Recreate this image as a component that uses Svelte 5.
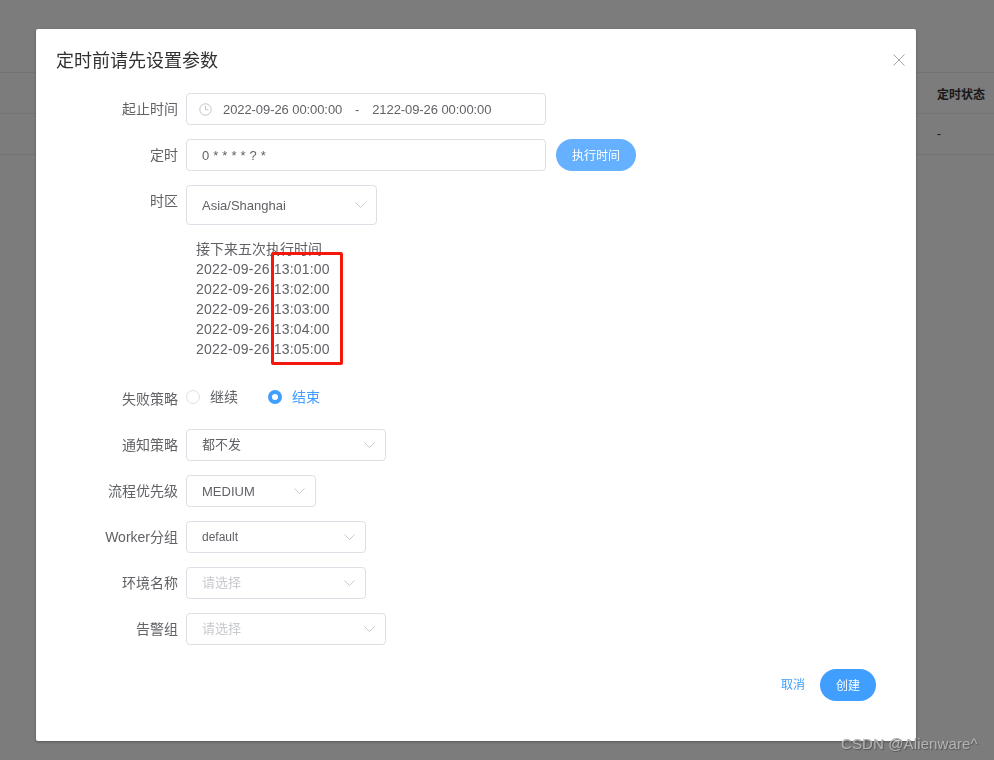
<script>
  const times = ['13:01:00', '13:02:00', '13:03:00', '13:04:00', '13:05:00'];
</script>

<div class="page">
  <div class="bg-head">
    <span class="bg-title">定时状态</span>
  </div>
  <div class="bg-row"><span class="bg-cell">-</span></div>
</div>

<div class="overlay">
  <div class="dialog">
    <header class="head">
      <h2>定时前请先设置参数</h2>
      <svg class="close" width="12" height="12" viewBox="0 0 12 12"><path d="M.5.5l11 11M11.5.5l-11 11" stroke="#a0a3a9" fill="none"/></svg>
    </header>

    <div class="form">
      <div class="row">
        <span class="label">起止时间</span>
        <div class="box range">
          <svg class="clock" width="13" height="13" viewBox="0 0 13 13"><circle cx="6.5" cy="6.5" r="5.7" stroke="#c0c4cc" fill="none"/><path d="M6.5 3v3.7h3" stroke="#c0c4cc" fill="none"/></svg>
          <span class="dt first">2022-09-26 00:00:00</span>
          <span class="sep">-</span>
          <span class="dt">2122-09-26 00:00:00</span>
        </div>
      </div>

      <div class="row">
        <span class="label">定时</span>
        <div class="box cron">0 * * * * ? *</div>
        <button class="btn exec">执行时间</button>
      </div>

      <div class="row tz">
        <span class="label">时区</span>
        <div class="box select w191">
          <span class="val">Asia/Shanghai</span>
          <svg class="chev" width="11" height="6" viewBox="0 0 11 6"><path d="M.5.5l5 5 5-5" stroke="#c8cbd2" fill="none"/></svg>
        </div>
      </div>

      <div class="times">
        <div class="cap">接下来五次执行时间</div>
        {#each times as t}
          <div>2022-09-26 {t}</div>
        {/each}
        <div class="mark"></div>
      </div>

      <div class="row radios">
        <span class="label">失败策略</span>
        <span class="radio"></span><span class="r-text">继续</span>
        <span class="radio on"></span><span class="r-text on">结束</span>
      </div>

      <div class="row">
        <span class="label">通知策略</span>
        <div class="box select w200">
          <span class="val cjk">都不发</span>
          <svg class="chev" width="11" height="6" viewBox="0 0 11 6"><path d="M.5.5l5 5 5-5" stroke="#c8cbd2" fill="none"/></svg>
        </div>
      </div>

      <div class="row">
        <span class="label">流程优先级</span>
        <div class="box select w130">
          <span class="val small">MEDIUM</span>
          <svg class="chev" width="11" height="6" viewBox="0 0 11 6"><path d="M.5.5l5 5 5-5" stroke="#c8cbd2" fill="none"/></svg>
        </div>
      </div>

      <div class="row">
        <span class="label">Worker分组</span>
        <div class="box select w180">
          <span class="val tiny">default</span>
          <svg class="chev" width="11" height="6" viewBox="0 0 11 6"><path d="M.5.5l5 5 5-5" stroke="#c8cbd2" fill="none"/></svg>
        </div>
      </div>

      <div class="row">
        <span class="label">环境名称</span>
        <div class="box select w180">
          <span class="val cjk ph">请选择</span>
          <svg class="chev" width="11" height="6" viewBox="0 0 11 6"><path d="M.5.5l5 5 5-5" stroke="#c8cbd2" fill="none"/></svg>
        </div>
      </div>

      <div class="row">
        <span class="label">告警组</span>
        <div class="box select w200">
          <span class="val cjk ph">请选择</span>
          <svg class="chev" width="11" height="6" viewBox="0 0 11 6"><path d="M.5.5l5 5 5-5" stroke="#c8cbd2" fill="none"/></svg>
        </div>
      </div>
    </div>

    <footer class="foot">
      <span class="cancel">取消</span>
      <button class="btn create">创建</button>
    </footer>
  </div>
</div>

<div class="wm">CSDN @Alienware^</div>

<style>
  :global(body) {
    margin: 0;
    background: #f8f8f8;
    font-family: "Liberation Sans", "Noto Sans CJK SC", sans-serif;
    overflow: hidden;
  }
  .page {
    height: 760px;
    padding-top: 72px;
    box-sizing: border-box;
  }
  .bg-head, .bg-row {
    height: 41px;
    border-top: 1px solid #e4e6ef;
    box-sizing: border-box;
    display: flex;
    align-items: center;
    padding-left: 937px;
    font-size: 12px;
    color: #333;
  }
  .bg-row { border-bottom: 1px solid #e4e6ef; height: 42px; }
  .bg-title { font-weight: 700; white-space: nowrap; }
  .overlay {
    position: fixed;
    inset: 0;
    background: rgba(0, 0, 0, 0.5);
  }
  .dialog {
    width: 880px;
    height: 712px;
    margin: 29px 0 0 36px;
    background: #fff;
    border-radius: 2px;
    box-shadow: 0 1px 3px rgba(0, 0, 0, 0.3);
    box-sizing: border-box;
    padding: 20px 40px 0 20px;
    color: #606266;
  }
  .head {
    display: flex;
    justify-content: space-between;
    align-items: flex-start;
    height: 44px;
    margin-right: -29px;
  }
  h2 {
    margin: 0;
    font-size: 18px;
    font-weight: 400;
    line-height: 24px;
    color: #303133;
  }
  .close { margin-top: 5px; }
  .form { display: flex; flex-direction: column; }
  .row {
    display: flex;
    align-items: center;
    margin-bottom: 14px;
    height: 32px;
  }
  .label {
    width: 122px;
    flex: none;
    margin-right: 8px;
    padding-bottom: 2px;
    text-align: right;
    font-size: 14px;
    color: #606266;
    white-space: nowrap;
  }
  .box {
    height: 32px;
    box-sizing: border-box;
    border: 1px solid #dcdfe6;
    border-radius: 4px;
    display: flex;
    align-items: center;
    font-size: 14px;
    color: #606266;
  }
  .range { width: 360px; padding-left: 12px; font-size: 13px; }
  .clock { margin-right: 11px; }
  .dt { letter-spacing: -0.08px; white-space: nowrap; }
  .sep { width: 30px; text-align: center; flex: none; }
  .cron { width: 360px; padding-left: 15px; font-size: 13px; letter-spacing: 0.2px; }
  .btn {
    border: 0;
    border-radius: 16px;
    height: 32px;
    color: #fff;
    font: inherit;
    font-size: 12px;
    padding: 0 0 2px;
  }
  .exec { width: 80px; background: #66b1ff; margin-left: 10px; }
  .tz { height: 40px; align-items: flex-start; }
  .tz .label { line-height: 32px; }
  .tz .box { height: 40px; }
  .select { padding-left: 15px; justify-content: space-between; padding-right: 10px; }
  .w191 { width: 191px; }
  .w200 { width: 200px; }
  .w130 { width: 130px; }
  .w180 { width: 180px; }
  .val { font-size: 13px; white-space: nowrap; }
  .val.cjk { padding-bottom: 4px; }
  .val.tiny { font-size: 12px; }
  .val.ph { color: #c8cacf; }
  .times {
    position: relative;
    padding-left: 140px;
    height: 144px;
    box-sizing: border-box;
    font-size: 14px;
    line-height: 20px;
    letter-spacing: 0.2px;
    color: #606266;
  }
  .cap { letter-spacing: 0; }
  .mark {
    position: absolute;
    left: 215px;
    top: 13px;
    width: 72px;
    height: 113px;
    border: 3px solid #f5160c;
    border-radius: 2px;
    box-sizing: border-box;
  }
  .radios { height: 20px; margin-bottom: 22px; margin-top: 4px; }
  .radios .label { padding: 1px 0 0; }
  .radio {
    width: 14px;
    height: 14px;
    border: 1px solid #dcdfe6;
    border-radius: 50%;
    box-sizing: border-box;
    flex: none;
  }
  .radio.on { border: 4.5px solid #409eff; background: #fff; margin-left: 30px; }
  .r-text { font-size: 14px; color: #606266; margin-left: 10px; padding-bottom: 2px; }
  .r-text.on { color: #409eff; }
  .foot {
    display: flex;
    justify-content: flex-end;
    align-items: center;
    margin-top: 10px;
  }
  .cancel { font-size: 12px; color: #409eff; margin-right: 15px; padding-bottom: 3px; }
  .create { width: 56px; background: #409eff; }
  .wm {
    position: fixed;
    left: 841px;
    top: 735px;
    font-size: 15px;
    line-height: 18px;
    letter-spacing: 0.12px;
    color: #b4b4b4;
    text-shadow: 1px 1px 1px #555;
    white-space: nowrap;
  }
</style>
